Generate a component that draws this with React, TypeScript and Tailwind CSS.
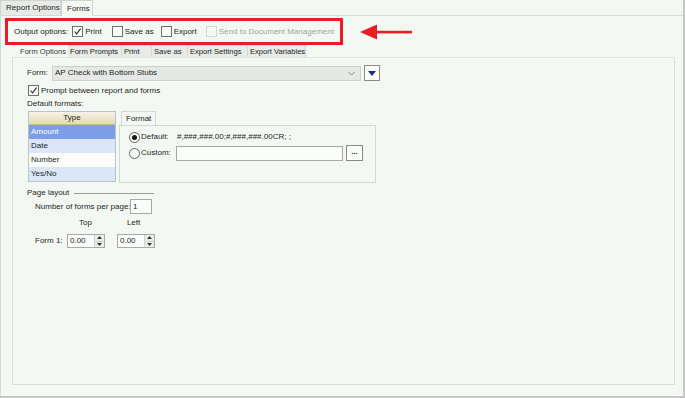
import React from 'react'

const font = { fontFamily: '"Liberation Sans", Arial, sans-serif' }

function CheckBox({ checked, disabled }: { checked?: boolean; disabled?: boolean }) {
  return (
    <span
      className={
        'inline-flex w-[11px] h-[11px] items-center justify-center border shrink-0 ' +
        (disabled ? 'border-[#d4d8d4] bg-[#f4f8f3]' : 'border-[#6f6f6f] bg-[#fbfdfb]')
      }
    >
      {checked && (
        <svg width="9" height="9" viewBox="0 0 9 9">
          <path d="M1.5 4.5 L3.6 6.8 L7.6 1.6" fill="none" stroke="#2b2b2b" strokeWidth="1.1" />
        </svg>
      )}
    </span>
  )
}

function Radio({ checked }: { checked?: boolean }) {
  return (
    <span className="inline-flex w-[11px] h-[11px] rounded-full border border-[#5f5f5f] bg-[#fbfdfb] items-center justify-center shrink-0">
      {checked && <span className="w-[5px] h-[5px] rounded-full bg-[#111]" />}
    </span>
  )
}

function Spinner({ value }: { value: string }) {
  return (
    <div className="flex w-[38px] h-[14px] border border-[#a9a9a9] bg-[#fbfdfb]">
      <span className="flex-1 pl-[2px] leading-[12px]">{value}</span>
      <div className="w-[10px] flex flex-col border-l border-[#d0d0d0] bg-[#eceeec]">
        <span className="flex-1 flex items-center justify-center border-b border-[#d0d0d0]">
          <svg width="5" height="3" viewBox="0 0 5 3"><path d="M0 3 L2.5 0 L5 3 Z" fill="#333" /></svg>
        </span>
        <span className="flex-1 flex items-center justify-center">
          <svg width="5" height="3" viewBox="0 0 5 3"><path d="M0 0 L2.5 3 L5 0 Z" fill="#333" /></svg>
        </span>
      </div>
    </div>
  )
}

const innerTabs = [
  { label: 'Form Options', w: 'w-[51px]' },
  { label: 'Form Prompts', w: 'w-[54px]' },
  { label: 'Print', w: 'w-[30px]' },
  { label: 'Save as', w: 'w-[36px]' },
  { label: 'Export Settings', w: 'w-[60px]' },
  { label: 'Export Variables', w: 'w-[58px]' },
]

const types = [
  { name: 'Amount', cls: 'bg-[#7c9ee6] text-white' },
  { name: 'Date', cls: 'bg-[#dbe6f9]' },
  { name: 'Number', cls: 'bg-[#fbfdfb]' },
  { name: 'Yes/No', cls: 'bg-[#dbe6f9]' },
]

export default function App() {
  return (
    <div
      className="w-[685px] h-[398px] bg-[#f4f8f3] text-[8px] leading-none whitespace-nowrap text-[#1e1e1e] flex flex-col border-r-2 border-b-2 border-[#c6c6c6] overflow-hidden"
      style={font}
    >
      {/* top tabs */}
      <div className="flex h-[16px] items-end border-b border-[#d6dad6]">
        <div className="w-[61px] h-[15px] pl-[5px] flex items-center bg-[#e7eae7] border border-b-0 border-[#d0d4d0]">
          Report Options
        </div>
        <div className="w-[32px] h-[16px] pl-[5px] flex items-center bg-[#f4f8f3] border border-b-0 border-[#d0d4d0] -mb-px">
          Forms
        </div>
      </div>

      <div className="flex-1 flex flex-col border-l border-[#d6dad6]">
        {/* output options + annotation */}
        <div className="flex items-center mt-[2px]">
          <div className="ml-[4px] w-[338px] h-[27px] border-[3px] border-[#ec1c24] flex items-center pl-[6px]">
            <span className="mr-[4px]">Output options:</span>
            <CheckBox checked />
            <span className="ml-[2px] mr-[10px]">Print</span>
            <CheckBox />
            <span className="ml-[2px] mr-[7px]">Save as</span>
            <CheckBox />
            <span className="ml-[2px] mr-[9px]">Export</span>
            <CheckBox disabled />
            <span className="ml-[2px] text-[#a0a4a0]">Send to Document Management</span>
          </div>
          <svg className="ml-[17px]" width="52" height="16" viewBox="0 0 52 16">
            <path d="M0 8 L17 0.5 L17 15.5 Z" fill="#ec1c24" />
            <rect x="15" y="6.8" width="37" height="2.6" fill="#ec1c24" />
          </svg>
        </div>

        {/* inner tabs */}
        <div className="flex h-[12px] ml-[16px] items-end text-[7.6px]">
          {innerTabs.map((t, i) => (
            <div
              key={t.label}
              className={
                t.w +
                ' h-[12px] pl-[2px] flex items-center border border-b-0 ' +
                (i === 0
                  ? 'bg-[#f4f8f3] border-[#f4f8f3] text-[#3a3a3a]'
                  : 'bg-[#e8ebe8] border-[#d4d8d4] border-l-0')
              }
            >
              {t.label}
            </div>
          ))}
        </div>

        {/* inner panel */}
        <div className="ml-[11px] mr-[8px] h-[328px] border border-[#dadeda] border-t-[#e2e4e2] flex flex-col pl-[14px]">
          <div className="flex items-center mt-[7px] h-[16px]">
            <span className="w-[25px]">Form:</span>
            <div className="w-[309px] h-[15px] bg-[#e6e8e6] border border-[#cdd0cd] flex items-center pl-[2px]">
              <span className="flex-1">AP Check with Bottom Stubs</span>
              <svg className="mr-[5px]" width="7" height="5" viewBox="0 0 7 5">
                <path d="M0.5 1 L3.5 4 L6.5 1" fill="none" stroke="#8a8a8a" strokeWidth="1" />
              </svg>
            </div>
            <div className="ml-[3px] w-[16px] h-[16px] border border-[#8a8a8a] bg-[#fbfdfb] flex items-center justify-center">
              <svg width="8" height="5" viewBox="0 0 8 5"><path d="M0 0 L8 0 L4 5 Z" fill="#1e2b8c" /></svg>
            </div>
          </div>

          <div className="flex items-center gap-[2px] mt-[4px] ml-px h-[11px]">
            <CheckBox checked />
            <span>Prompt between report and forms</span>
          </div>

          <div className="mt-[3px] h-[10px] flex items-center">Default formats:</div>

          <div className="flex mt-px ml-px">
            <div className="w-[88px] h-[71px] mt-px border border-[#b8c4cc] bg-[#fbfdfb] flex flex-col">
              <div className="h-[13px] flex items-center justify-center bg-gradient-to-b from-[#f7f3e6] to-[#e3d9be] border-b border-[#c9bc98]">
                Type
              </div>
              {types.map((t) => (
                <div key={t.name} className={'h-[14px] flex items-center pl-[2px] ' + t.cls}>
                  {t.name}
                </div>
              ))}
            </div>

            <div className="ml-[3px] flex flex-col">
              <div className="flex h-[15px] items-end">
                <div className="h-[15px] w-[35px] ml-[2px] flex items-center pl-[4px] border border-b-0 border-[#d4d8d4] bg-[#f4f8f3] -mb-px">
                  Format
                </div>
              </div>
              <div className="w-[257px] h-[58px] border border-[#d4d8d4] flex flex-col pl-[9px] pt-[5px]">
                <div className="flex items-center gap-[1px] h-[12px]">
                  <Radio checked />
                  <span className="w-[35px]">Default:</span>
                  <span>#,###,###.00;#,###,###.00CR; ;</span>
                </div>
                <div className="flex items-center gap-[1px] mt-[2px] h-[16px]">
                  <Radio />
                  <span className="w-[34px]">Custom:</span>
                  <div className="w-[167px] h-[15px] border border-[#a9a9a9] bg-[#fbfdfb]" />
                  <div className="ml-[2px] w-[17px] h-[16px] border border-[#8a8a8a] bg-[#fbfdfb] flex items-center justify-center pb-[3px] font-bold">
                    ...
                  </div>
                </div>
              </div>
            </div>
          </div>

          <div className="flex items-center mt-[5px] h-[10px]">
            <span>Page layout</span>
            <span className="ml-[5px] w-[80px] h-px bg-[#9a9a9a]" />
          </div>

          <div className="flex items-center ml-[8px] mt-px h-[15px]">
            <span className="w-[95px]">Number of forms per page:</span>
            <div className="w-[22px] h-[15px] border border-[#a9a9a9] bg-[#fbfdfb] pl-[2px] flex items-center">1</div>
          </div>

          <div className="flex ml-[8px] mt-[4px] h-[10px] items-center">
            <span className="ml-[44px]">Top</span>
            <span className="ml-[35px]">Left</span>
          </div>

          <div className="flex items-center ml-[8px] mt-[6px] h-[14px]">
            <span className="w-[32px]">Form 1:</span>
            <Spinner value="0.00" />
            <span className="w-[12px]" />
            <Spinner value="0.00" />
          </div>
        </div>
      </div>
    </div>
  )
}
